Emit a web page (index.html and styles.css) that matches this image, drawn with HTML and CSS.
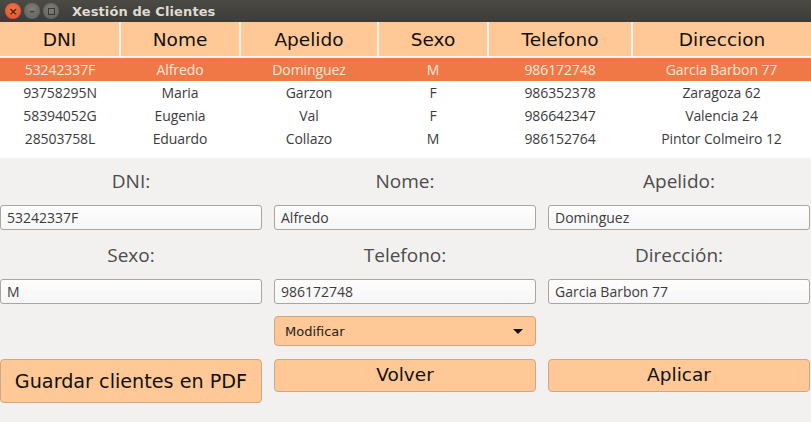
FILE: index.html
```html
<!DOCTYPE html>
<html>
<head>
<meta charset="utf-8">
<link rel="stylesheet" href="styles.css">
</head>
<body>
<div class="window">
  <div class="titlebar">
    <div class="wbtns">
      <span class="wbtn close">×</span>
      <span class="wbtn min">–</span>
      <span class="wbtn max"><span class="sq"></span></span>
    </div>
    <div class="title">Xestión de Clientes</div>
  </div>
  <div class="tablewrap">
    <table class="grid">
      <colgroup>
        <col class="c1"><col class="c2"><col class="c3"><col class="c4"><col class="c5"><col class="c6">
      </colgroup>
      <thead>
        <tr><th>DNI</th><th>Nome</th><th>Apelido</th><th>Sexo</th><th>Telefono</th><th>Direccion</th></tr>
      </thead>
      <tbody>
        <tr class="sel"><td>53242337F</td><td>Alfredo</td><td>Dominguez</td><td>M</td><td>986172748</td><td>Garcia Barbon 77</td></tr>
        <tr><td>93758295N</td><td>Maria</td><td>Garzon</td><td>F</td><td>986352378</td><td>Zaragoza 62</td></tr>
        <tr><td>58394052G</td><td>Eugenia</td><td>Val</td><td>F</td><td>986642347</td><td>Valencia 24</td></tr>
        <tr><td>28503758L</td><td>Eduardo</td><td>Collazo</td><td>M</td><td>986152764</td><td>Pintor Colmeiro 12</td></tr>
      </tbody>
    </table>
  </div>
  <div class="form">
    <div class="label">DNI:</div>
    <div class="label">Nome:</div>
    <div class="label">Apelido:</div>
    <div class="field">53242337F</div>
    <div class="field">Alfredo</div>
    <div class="field">Dominguez</div>
    <div class="label">Sexo:</div>
    <div class="label">Telefono:</div>
    <div class="label">Dirección:</div>
    <div class="field">M</div>
    <div class="field">986172748</div>
    <div class="field">Garcia Barbon 77</div>
    <div class="empty"></div>
    <div class="combo"><span>Modificar</span><span class="arrow"></span></div>
    <div class="empty"></div>
    <div class="btn big">Guardar clientes en PDF</div>
    <div class="btn">Volver</div>
    <div class="btn">Aplicar</div>
  </div>
</div>
</body>
</html>
```
FILE: styles.css
```css
html, body {
  margin: 0;
  padding: 0;
}
body {
  width: 811px;
  height: 422px;
  overflow: hidden;
  background: #f2f1f0;
  font-family: "Open Sans", "DejaVu Sans", sans-serif;
}
.window {
  display: flex;
  flex-direction: column;
  height: 422px;
}
.titlebar {
  height: 22px;
  background: linear-gradient(#4b4a45, #3c3b37);
  display: flex;
  align-items: center;
}
.wbtns {
  display: flex;
  gap: 3px;
  padding-left: 5px;
  width: 72px;
  box-sizing: border-box;
}
.wbtn {
  width: 16px;
  height: 16px;
  border-radius: 50%;
  display: flex;
  align-items: center;
  justify-content: center;
  font-family: "DejaVu Sans", sans-serif;
  font-size: 11px;
  line-height: 1;
  box-sizing: border-box;
}
.close {
  background: radial-gradient(circle at 50% 40%, #f57650, #dd4b20);
  color: #4a2410;
  font-weight: bold;
}
.min, .max {
  background: radial-gradient(circle at 50% 40%, #807f7a, #5c5b56);
  color: #3a3935;
  font-weight: bold;
}
.sq {
  width: 7px;
  height: 7px;
  border: 1px solid #3a3935;
  box-sizing: border-box;
}
.title {
  color: #dfdbd2;
  font-family: "DejaVu Sans", sans-serif;
  font-weight: bold;
  font-size: 13px;
  letter-spacing: 0.1px;
}
.tablewrap {
  background: #ffffff;
  height: 136px;
}
.grid {
  border-collapse: collapse;
  table-layout: fixed;
  width: 811px;
}
.c1 { width: 120px; }
.c2 { width: 120px; }
.c3 { width: 138px; }
.c4 { width: 110px; }
.c5 { width: 144px; }
.c6 { width: 179px; }
.grid th {
  background: #ffc896;
  height: 34px;
  padding: 0;
  font-family: "DejaVu Sans", sans-serif;
  font-weight: normal;
  font-size: 18.5px;
  color: #111;
  border-right: 2px solid #fff4ea;
  border-bottom: 2px solid #fff4ea;
}
.grid th:last-child {
  border-right: none;
}
.grid td {
  height: 23px;
  padding: 0;
  text-align: center;
  font-size: 14px;
  color: #3c3c3c;
  letter-spacing: -0.1px;
}
.grid tr.sel td {
  background: #f07846;
  color: #fde8dc;
}
.form {
  display: grid;
  grid-template-columns: 262px 262px 262px;
  column-gap: 12px;
  grid-template-rows: 47px 27px 47px 27px 53px 44px;
  align-items: start;
}
.label {
  text-align: center;
  font-size: 19px;
  color: #4c4c4c;
  padding-top: 10px;
  line-height: 26px;
}
.field {
  height: 25px;
  box-sizing: border-box;
  border: 1px solid #a9a6a2;
  border-radius: 3px;
  background: linear-gradient(#fdfdfd, #f6f6f6);
  font-size: 14px;
  color: #3c3c3c;
  padding-left: 6px;
  line-height: 23px;
}
.combo {
  margin-top: 10px;
  height: 30px;
  box-sizing: border-box;
  border: 1px solid #d6a47a;
  border-radius: 4px;
  background: #ffc896;
  display: flex;
  align-items: center;
  justify-content: space-between;
  padding: 0 12px 0 10px;
  font-family: "DejaVu Sans", sans-serif;
  font-size: 13px;
  color: #222;
}
.arrow {
  width: 0;
  height: 0;
  border-left: 5px solid transparent;
  border-right: 5px solid transparent;
  border-top: 5px solid #111;
}
.btn {
  height: 33px;
  box-sizing: border-box;
  border: 1px solid #cfa786;
  border-radius: 4px;
  background: #ffc896;
  display: flex;
  align-items: center;
  justify-content: center;
  font-family: "DejaVu Sans", sans-serif;
  font-size: 18.5px;
  color: #111;
  padding-bottom: 2px;
}
.btn.big {
  height: 44px;
  padding-bottom: 0;
  font-size: 19.2px;
}
```
